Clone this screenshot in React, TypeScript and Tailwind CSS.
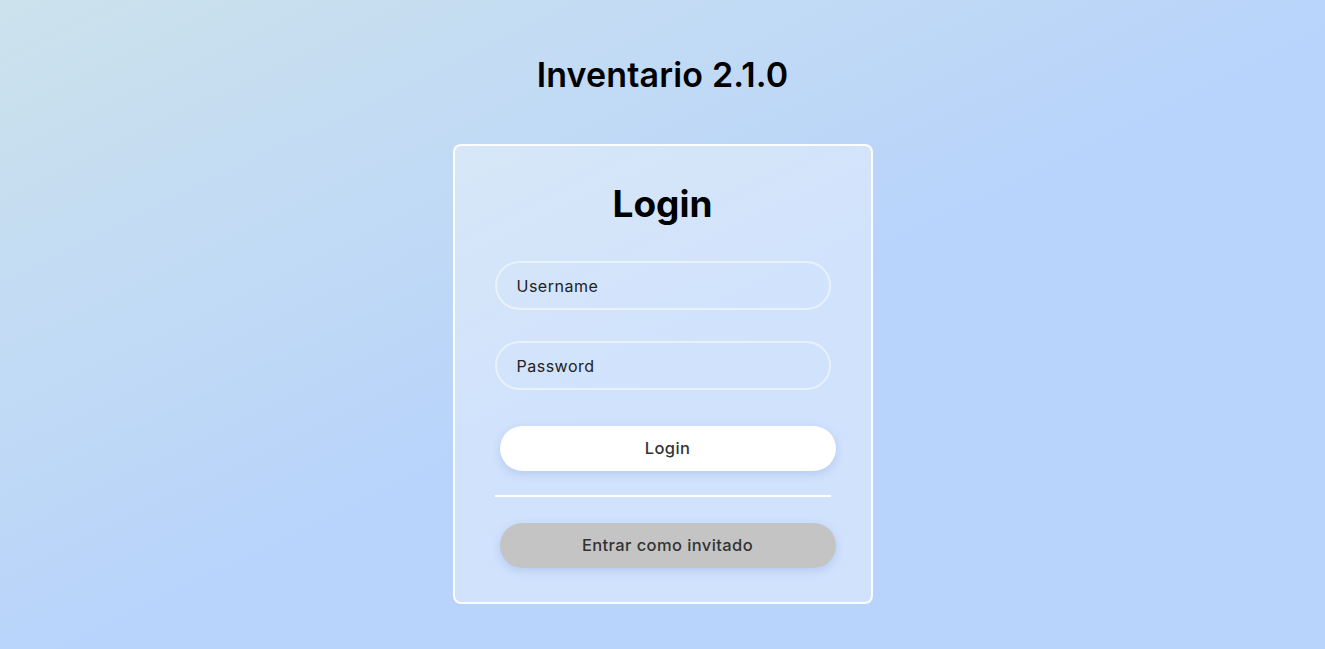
import React from "react";

export default function App() {
  return (
    <div
      className="min-h-[649px] w-full flex flex-col items-center bg-[linear-gradient(to_bottom_right,#cce2ec,#b8d3fc_55%,#b8d3fc)]"
      style={{ fontFamily: "Inter, 'Noto Sans', sans-serif" }}
    >
      <h1 className="mt-[50px] h-[50px] leading-[50px] text-[34px] font-semibold text-black tracking-[0.15px]">
        Inventario 2.1.0
      </h1>
      <div className="mt-[44px] w-[420px] rounded-[8px] border-2 border-white/90 bg-white/35 px-[40px] pt-[34px] pb-[34px] flex flex-col">
        <h2 className="h-[48px] leading-[48px] text-center text-[37px] font-bold text-black">Login</h2>
        <input
          placeholder="Username"
          className="mt-[33px] h-[49px] w-full rounded-full border-2 border-white/50 bg-transparent px-[20px] text-[16px] tracking-[0.5px] text-[#222] placeholder:text-[#222] outline-none"
        />
        <input
          type="password"
          placeholder="Password"
          className="mt-[31px] h-[49px] w-full rounded-full border-2 border-white/50 bg-transparent px-[20px] text-[16px] tracking-[0.5px] text-[#222] placeholder:text-[#222] outline-none"
        />
        <button className="mt-[36px] ml-[5px] h-[45px] w-[336px] shrink-0 rounded-full bg-white text-[16.5px] tracking-[0.4px] font-medium text-[#333] shadow-[0_3px_10px_rgba(100,140,200,0.25)]">
          Login
        </button>
        <div className="mt-[24px] h-[2px] w-full bg-white" />
        <button className="mt-[26px] ml-[5px] h-[45px] w-[336px] shrink-0 rounded-full bg-[#c4c4c4] text-[16.5px] tracking-[0.4px] font-medium text-[#333] shadow-[0_3px_10px_rgba(100,140,200,0.25)]">
          Entrar como invitado
        </button>
      </div>
    </div>
  );
}
